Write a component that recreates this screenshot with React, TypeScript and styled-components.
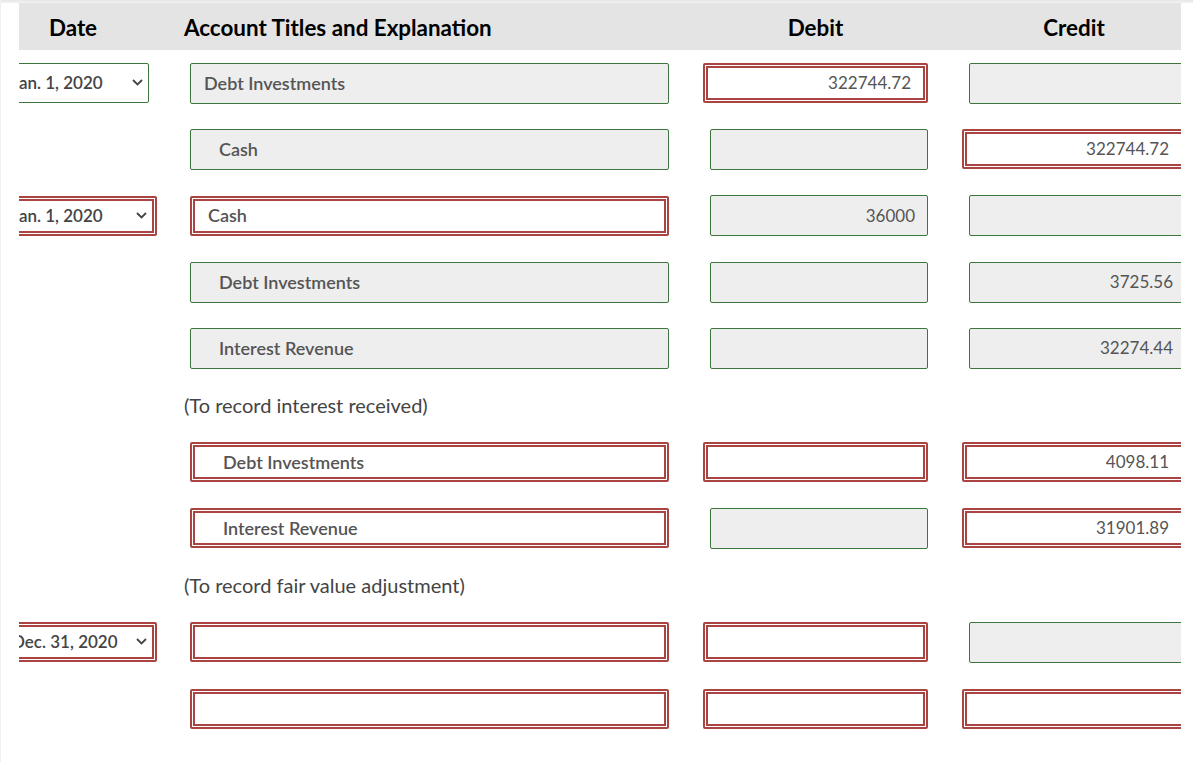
import React from "react";
import styled, { createGlobalStyle, css } from "styled-components";

const GlobalStyle = createGlobalStyle`
  html, body {
    margin: 0;
    padding: 0;
    background: #fff;
  }
  body {
    font-family: Lato, "Open Sans", "Liberation Sans", sans-serif;
    color: #555;
  }
`;

const RED = "#a94442";
const GREEN = "#3c763d";

type Tone = "ok" | "bad";

const Page = styled.div`
  width: 1193px;
  height: 762px;
  overflow: hidden;
  border-left: 1px solid #f1f1f1;
  box-sizing: border-box;
`;

const TopShade = styled.div`
  height: 3px;
  background: linear-gradient(#e6e6e6, #f3f3f3);
`;

const Frame = styled.div`
  margin-left: 18px;
  width: 1162px;
  overflow: hidden;
`;

const Sheet = styled.div`
  margin-left: -29px;
  width: 1196px;
`;

const Grid = styled.div`
  display: grid;
  grid-template-columns: 166px 479px 225px 224px;
  column-gap: 34px;
  align-items: center;
`;

const HeadRow = styled(Grid)`
  height: 47px;
  background: #e4e4e4;
  font-weight: 700;
  font-size: 22.4px;
  color: #000;
`;

const HeadCell = styled.div<{ $left?: boolean }>`
  text-align: ${({ $left }) => ($left ? "left" : "center")};
  margin-left: ${({ $left }) => ($left ? "-6px" : "0")};
  padding-top: 1px;
`;

const Row = styled(Grid)`
  height: 66.3px;
`;

const NoteRow = styled(Grid)`
  height: 47.5px;
`;

const Note = styled.div`
  grid-column: 2 / 5;
  margin-left: -6px;
  font-size: 20px;
  color: #444;
`;

const fieldTone = (tone: Tone) =>
  tone === "bad"
    ? css`
        border: 5px double ${RED};
        background: #fff;
        height: 40px;
      `
    : css`
        border: 1px solid ${GREEN};
        background: #eee;
        height: 41px;
      `;

const Field = styled.div<{ $tone: Tone; $indent?: boolean; $num?: boolean }>`
  ${({ $tone }) => fieldTone($tone)}
  box-sizing: border-box;
  border-radius: 2px;
  display: flex;
  align-items: center;
  justify-content: ${({ $num }) => ($num ? "flex-end" : "flex-start")};
  font-size: ${({ $num }) => ($num ? "17px" : "18px")};
  font-weight: ${({ $num }) => ($num ? 400 : 600)};
  color: #555;
  padding: 0 ${({ $num }) => ($num ? "12px" : "0")} 1px
    ${({ $indent, $num }) => ($num ? "0" : $indent ? "28px" : "13px")};
  white-space: nowrap;
`;

const AmountField = styled(Field)`
  margin-left: ${({ $tone }) => ($tone === "bad" ? "0" : "7px")};
`;

const Select = styled.div<{ $tone: Tone }>`
  ${({ $tone }) => fieldTone($tone)}
  box-sizing: border-box;
  border-radius: 2px;
  height: 40px;
  width: ${({ $tone }) => ($tone === "bad" ? "167px" : "159px")};
  display: flex;
  align-items: center;
  justify-content: space-between;
  padding: 0 5px 1px ${({ $tone }) => ($tone === "bad" ? "17px" : "21px")};
  font-size: 17px;
  font-weight: 600;
  color: #444;
  background: #fff;
  white-space: nowrap;
`;

const Chevron = () => (
  <svg width="11" height="7" viewBox="0 0 11 7" fill="none">
    <path d="M1 1l4.5 4.5L10 1" stroke="#444" strokeWidth="1.8" />
  </svg>
);

type Line = {
  date?: { text: string; tone: Tone };
  account: { text: string; tone: Tone; indent?: boolean };
  debit: { text: string; tone: Tone };
  credit: { text: string; tone: Tone };
};

type Item = Line | { note: string };

const items: Item[] = [
  {
    date: { text: "Jan. 1, 2020", tone: "ok" },
    account: { text: "Debt Investments", tone: "ok" },
    debit: { text: "322744.72", tone: "bad" },
    credit: { text: "", tone: "ok" },
  },
  {
    account: { text: "Cash", tone: "ok", indent: true },
    debit: { text: "", tone: "ok" },
    credit: { text: "322744.72", tone: "bad" },
  },
  {
    date: { text: "Jan. 1, 2020", tone: "bad" },
    account: { text: "Cash", tone: "bad" },
    debit: { text: "36000", tone: "ok" },
    credit: { text: "", tone: "ok" },
  },
  {
    account: { text: "Debt Investments", tone: "ok", indent: true },
    debit: { text: "", tone: "ok" },
    credit: { text: "3725.56", tone: "ok" },
  },
  {
    account: { text: "Interest Revenue", tone: "ok", indent: true },
    debit: { text: "", tone: "ok" },
    credit: { text: "32274.44", tone: "ok" },
  },
  { note: "(To record interest received)" },
  {
    account: { text: "Debt Investments", tone: "bad", indent: true },
    debit: { text: "", tone: "bad" },
    credit: { text: "4098.11", tone: "bad" },
  },
  {
    account: { text: "Interest Revenue", tone: "bad", indent: true },
    debit: { text: "", tone: "ok" },
    credit: { text: "31901.89", tone: "bad" },
  },
  { note: "(To record fair value adjustment)" },
  {
    date: { text: "Dec. 31, 2020", tone: "bad" },
    account: { text: "", tone: "bad" },
    debit: { text: "", tone: "bad" },
    credit: { text: "", tone: "ok" },
  },
  {
    account: { text: "", tone: "bad" },
    debit: { text: "", tone: "bad" },
    credit: { text: "", tone: "bad" },
  },
];

const App = () => (
  <Page>
    <GlobalStyle />
    <TopShade />
    <Frame>
      <Sheet>
        <HeadRow>
          <HeadCell>Date</HeadCell>
          <HeadCell $left>Account Titles and Explanation</HeadCell>
          <HeadCell>Debit</HeadCell>
          <HeadCell>Credit</HeadCell>
        </HeadRow>
        {items.map((item, i) =>
          "note" in item ? (
            <NoteRow key={i}>
              <Note>{item.note}</Note>
            </NoteRow>
          ) : (
            <Row key={i}>
              <div>
                {item.date && (
                  <Select $tone={item.date.tone}>
                    <span>{item.date.text}</span>
                    <Chevron />
                  </Select>
                )}
              </div>
              <Field $tone={item.account.tone} $indent={item.account.indent}>
                {item.account.text}
              </Field>
              <AmountField $tone={item.debit.tone} $num>
                {item.debit.text}
              </AmountField>
              <AmountField $tone={item.credit.tone} $num>
                {item.credit.text}
              </AmountField>
            </Row>
          )
        )}
      </Sheet>
    </Frame>
  </Page>
);

export default App;
